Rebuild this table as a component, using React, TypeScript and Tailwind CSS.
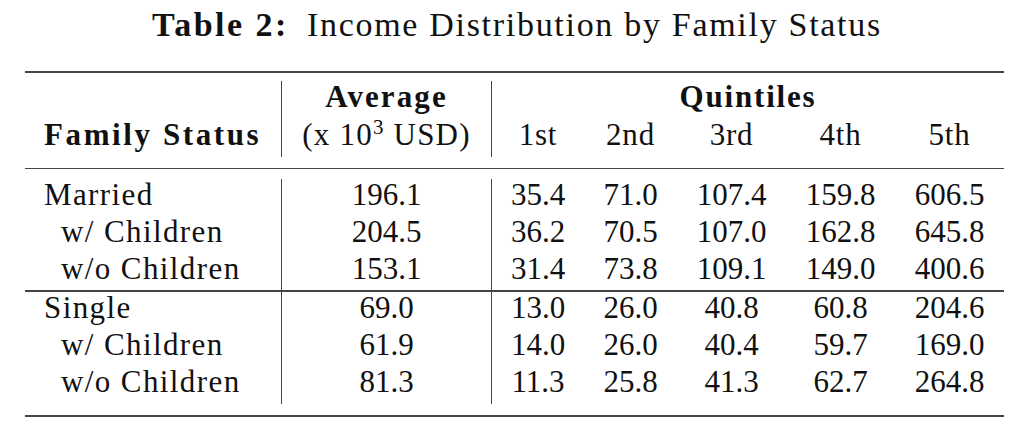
import React from "react";

type Row = {
  label: string;
  indent?: boolean;
  avg: string;
  q: string[];
};

const married: Row[] = [
  { label: "Married", avg: "196.1", q: ["35.4", "71.0", "107.4", "159.8", "606.5"] },
  { label: "w/ Children", indent: true, avg: "204.5", q: ["36.2", "70.5", "107.0", "162.8", "645.8"] },
  { label: "w/o Children", indent: true, avg: "153.1", q: ["31.4", "73.8", "109.1", "149.0", "400.6"] },
];

const single: Row[] = [
  { label: "Single", avg: "69.0", q: ["13.0", "26.0", "40.8", "60.8", "204.6"] },
  { label: "w/ Children", indent: true, avg: "61.9", q: ["14.0", "26.0", "40.4", "59.7", "169.0"] },
  { label: "w/o Children", indent: true, avg: "81.3", q: ["11.3", "25.8", "41.3", "62.7", "264.8"] },
];

// column widths follow the LaTeX tabular: label | average | 5 quintiles
const cols = "grid grid-cols-[257px_210px_92px_93px_109px_109px_109px]";

const BodyBlock = ({ rows }: { rows: Row[] }) => (
  <div className={cols + " leading-[32px]"}>
    {rows.map((r) => (
      <React.Fragment key={r.label + r.avg}>
        <div
          className={
            r.indent
              ? "h-[37.3px] border-r-[1.5px] border-[#444] tracking-[1.4px] pl-[36px]"
              : "h-[37.3px] border-r-[1.5px] border-[#444] tracking-[1.4px] pl-[19px]"
          }
        >
          {r.label}
        </div>
        <div className="h-[37.3px] border-r-[1.5px] border-[#444] text-center">
          {r.avg}
        </div>
        {r.q.map((v, i) => (
          <div key={i} className="h-[37.3px] text-center">
            {v}
          </div>
        ))}
      </React.Fragment>
    ))}
  </div>
);

const App = () => {
  return (
    <div className="w-[1024px] h-[432px] bg-white overflow-hidden">
      <div
        className="font-['Liberation_Serif'] text-[31px] text-[#111]"
        style={{ fontFamily: "'Liberation Serif', serif" }}
      >
        <div className="h-[71px] pt-[4.5px] pl-[10px] flex justify-center text-[34px] leading-[40px]">
          <span className="font-bold tracking-[2.5px]">Table 2:</span>
          <span className="ml-[18px] tracking-[1.7px]">
            Income Distribution by Family Status
          </span>
        </div>

        <div className="ml-[25px] w-[979px]">
          <div className="h-[2px] bg-[#444]" />

          <div className={cols + " mt-[7.5px] leading-[32px]"}>
            <div className="row-span-2 flex items-end h-[76px] pb-[6px] pl-[19px] border-r-[1.5px] border-[#444] font-bold tracking-[2.6px]">
              Family Status
            </div>
            <div className="row-span-2 flex flex-col items-center border-r-[1.5px] border-[#444]">
              <div className="h-[38px] font-bold tracking-[2.1px]">Average</div>
              <div className="h-[38px] tracking-[1.2px]">
                (x 10<sup className="text-[21px]">3</sup> USD)
              </div>
            </div>
            <div className="col-span-5 h-[38px] text-center font-bold tracking-[1.8px]">
              Quintiles
            </div>
            {["1st", "2nd", "3rd", "4th", "5th"].map((h) => (
              <div key={h} className="h-[38px] text-center tracking-[0.8px]">
                {h}
              </div>
            ))}
          </div>

          <div className="mt-[11px] h-[1.5px] bg-[#444]" />

          <div className="mt-[9.5px]">
            <BodyBlock rows={married} />
            <div className="h-[1.5px] bg-[#444]" />
            <BodyBlock rows={single} />
          </div>

          <div className="mt-[11px] h-[2px] bg-[#444]" />
        </div>
      </div>
    </div>
  );
};

export default App;
